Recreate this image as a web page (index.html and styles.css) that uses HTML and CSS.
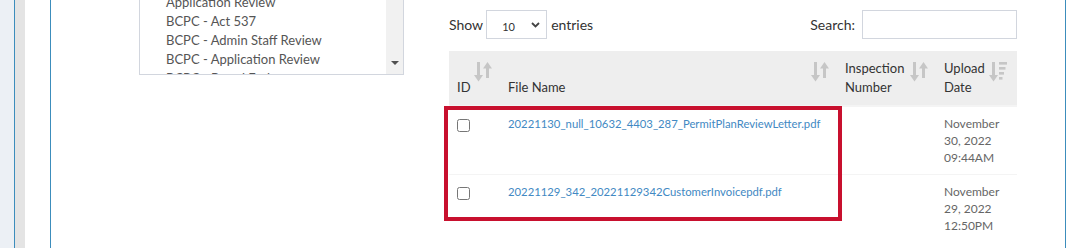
FILE: index.html
```html
<!DOCTYPE html>
<html>
<head>
  <title>Inspection Documents</title>
  <link rel="stylesheet" href="styles.css">
</head>
<body>
  <div class="side-strip"></div>
  <div class="frame">
    <div class="frame-edge"></div>
    <div class="frame-inner">
      <div class="panel">
        <div class="col-left">
          <div class="listbox">
            <ul class="listbox-items">
              <li>Application Review</li>
              <li>BCPC - Act 537</li>
              <li>BCPC - Admin Staff Review</li>
              <li>BCPC - Application Review</li>
              <li>BCPC - Board Endorsement</li>
            </ul>
            <div class="listbox-scroll"><span class="scroll-arrow"></span></div>
          </div>
        </div>

        <div class="col-right">
          <div class="dt-controls">
            <label class="dt-length">Show
              <span class="select-wrap">
                <select class="dt-select">
                  <option>10</option>
                  <option>25</option>
                  <option>50</option>
                  <option>100</option>
                </select>
                <svg class="chevron" width="9" height="6" viewBox="0 0 9 6"><path d="M1 1l3.5 3.5L8 1" fill="none" stroke="#444" stroke-width="1.8"/></svg>
              </span>
              entries</label>
            <label class="dt-search">Search: <input type="search" class="search-input"></label>
          </div>

          <div class="table-wrap">
            <table class="dt-table">
              <thead>
                <tr>
                  <th class="c-id">ID
                    <svg class="sort-icon" width="18" height="20" viewBox="0 0 18 20"><rect x="3" y="0" width="3" height="14"/><polygon points="0,13 9,13 4.5,19.5"/><polygon points="9,6.5 18,6.5 13.5,0"/><rect x="12" y="6" width="3" height="10"/></svg>
                  </th>
                  <th class="c-name">File Name
                    <svg class="sort-icon" width="18" height="20" viewBox="0 0 18 20"><rect x="3" y="0" width="3" height="14"/><polygon points="0,13 9,13 4.5,19.5"/><polygon points="9,6.5 18,6.5 13.5,0"/><rect x="12" y="6" width="3" height="10"/></svg>
                  </th>
                  <th class="c-insp">Inspection Number
                    <svg class="sort-icon" width="18" height="20" viewBox="0 0 18 20"><rect x="3" y="0" width="3" height="14"/><polygon points="0,13 9,13 4.5,19.5"/><polygon points="9,6.5 18,6.5 13.5,0"/><rect x="12" y="6" width="3" height="10"/></svg>
                  </th>
                  <th class="c-date">Upload Date
                    <svg class="sort-icon" width="20" height="20" viewBox="0 0 20 20"><rect x="3" y="0" width="3" height="14"/><polygon points="0,13 9,13 4.5,19.5"/><rect x="10" y="0" width="8" height="2.6"/><rect x="10" y="5" width="6.5" height="2.6"/><rect x="10" y="10" width="5" height="2.6"/><rect x="10" y="15" width="3.5" height="2.6"/></svg>
                  </th>
                </tr>
              </thead>
              <tbody>
                <tr>
                  <td><input type="checkbox" class="row-check"></td>
                  <td><a href="#">20221130_null_10632_4403_287_PermitPlanReviewLetter.pdf</a></td>
                  <td></td>
                  <td class="date">November<br>30, 2022<br>09:44AM</td>
                </tr>
                <tr>
                  <td><input type="checkbox" class="row-check"></td>
                  <td><a href="#">20221129_342_20221129342CustomerInvoicepdf.pdf</a></td>
                  <td></td>
                  <td class="date">November<br>29, 2022<br>12:50PM</td>
                </tr>
              </tbody>
            </table>
            <div class="highlight-box"></div>
          </div>
        </div>
      </div>
    </div>
  </div>
</body>
</html>
```

FILE: styles.css
```css
html, body {
  height: 100%;
}
body {
  margin: 0;
  display: flex;
  font-family: Lato, "Liberation Sans", sans-serif;
  font-size: 14px;
  color: #333;
  background-color: #fff;
  overflow: hidden;
}
.side-strip {
  width: 14px;
  background-color: #ecf0f5;
}
.frame {
  display: flex;
  border-left: 1px solid #3c8dbc;
}
.frame-edge {
  width: 10px;
  background-color: #e4e4e4;
}
.frame-inner {
  display: flex;
  padding-left: 25px;
  background-color: #fff;
}
.panel {
  display: flex;
  align-items: flex-start;
  width: 1014px;
  border-left: 1px solid #3c8dbc;
  border-right: 1px solid #3c8dbc;
}

/* left column: multi-select list */
.col-left {
  padding-left: 88px;
  width: 265px;
  margin-right: 45px;
}
.listbox {
  display: flex;
  box-sizing: border-box;
  width: 265px;
  height: 76px;
  margin-top: -1px;
  border: 1px solid #d2d6de;
  overflow: hidden;
}
.listbox-items {
  flex: 1;
  list-style: none;
  margin: -7px 0 0;
  padding: 0 0 0 26px;
  font-size: 13px;
  line-height: 19px;
  color: #555;
  overflow: hidden;
}
.listbox-items li {
  white-space: nowrap;
}
.listbox-scroll {
  display: flex;
  flex-direction: column;
  justify-content: flex-end;
  align-items: center;
  width: 17px;
  padding-bottom: 9px;
  box-sizing: border-box;
  background-color: #f1f1f1;
}
.scroll-arrow {
  width: 0;
  height: 0;
  border-left: 4px solid transparent;
  border-right: 4px solid transparent;
  border-top: 4px solid #505050;
}

/* right column: datatable */
.col-right {
  width: 568px;
}
.dt-controls {
  display: flex;
  justify-content: space-between;
  align-items: center;
  padding-top: 10px;
  margin-bottom: 12px;
  font-size: 14px;
}
.dt-length, .dt-search {
  display: flex;
  align-items: center;
  font-weight: normal;
}
.select-wrap {
  position: relative;
  margin: 0 4px 0 3px;
}
.dt-select {
  appearance: none;
  -webkit-appearance: none;
  width: 61px;
  height: 29px;
  padding: 4px 0 0 15px;
  border: 1px solid #d2d6de;
  border-radius: 0;
  background-color: #fff;
  font-family: Lato, "Liberation Sans", sans-serif;
  font-size: 11px;
  color: #333;
}
.chevron {
  position: absolute;
  right: 7px;
  top: 12px;
  pointer-events: none;
}
.search-input {
  box-sizing: border-box;
  width: 155px;
  height: 29px;
  margin-left: 7px;
  border: 1px solid #d2d6de;
  border-radius: 0;
}

.table-wrap {
  position: relative;
}
.dt-table {
  width: 568px;
  border-collapse: collapse;
  table-layout: fixed;
}
.dt-table th {
  position: relative;
  padding: 8px 30px 8px 8px;
  background-color: #eeeeee;
  border-bottom: 2px solid #f4f4f4;
  text-align: left;
  vertical-align: bottom;
  font-size: 13px;
  font-weight: normal;
  line-height: 19px;
  color: #333;
}
/* content widths: column width minus 38px of padding */
.c-id { width: 13px; }
.c-name { width: 299px; }
.c-insp { width: 61px; }
.c-date { width: 43px; }
.sort-icon {
  position: absolute;
  top: 11px;
  right: 8px;
  fill: #c6c6c6;
}
.dt-table td {
  padding: 8px;
  border-top: 1px solid #f4f4f4;
  vertical-align: top;
  font-size: 12px;
  line-height: 17px;
}
.dt-table td a {
  font-size: 11.3px;
  color: #4289c3;
  text-decoration: none;
}
.row-check {
  margin: 4px 0 0;
  width: 13px;
  height: 13px;
}
.date {
  color: #666;
  white-space: nowrap;
}
.highlight-box {
  position: absolute;
  left: -5px;
  top: 55px;
  width: 398px;
  height: 115px;
  box-sizing: border-box;
  border: 4px solid #c8102e;
  pointer-events: none;
}
```
